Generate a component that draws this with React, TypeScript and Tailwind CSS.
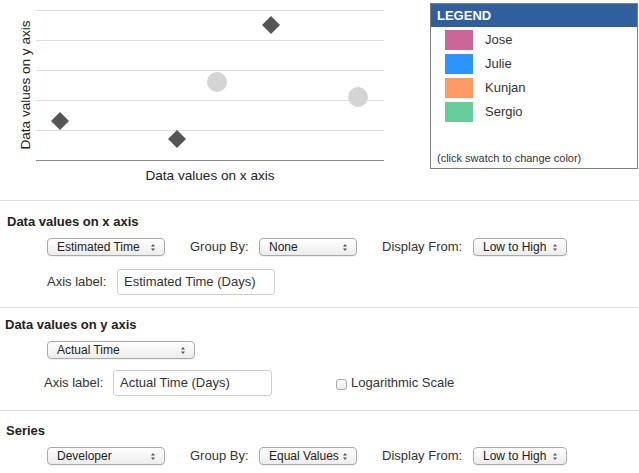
import React from "react";

function Arrows() {
  return (
    <svg width="6" height="9" viewBox="0 0 6 9" className="shrink-0">
      <path d="M3 1 L5 3.5 L1 3.5 Z" fill="#555" />
      <path d="M3 8 L5 5.5 L1 5.5 Z" fill="#555" />
    </svg>
  );
}

function Select({ label, w }: { label: string; w: string }) {
  return (
    <div
      className={`${w} h-[18px] flex items-center justify-between pl-[9px] pr-[8px] rounded-[4px] border border-[#a9a9a9] bg-gradient-to-b from-white to-[#ececec] text-[12px] text-[#222] shadow-[0_1px_0_rgba(0,0,0,0.06)]`}
    >
      <span className="leading-none">{label}</span>
      <Arrows />
    </div>
  );
}

function Input({ value, w }: { value: string; w: string }) {
  return (
    <div
      className={`${w} h-[26px] flex items-center pl-[6px] border border-[#cfcfcf] rounded-[3px] bg-white text-[13px] text-[#333]`}
    >
      {value}
    </div>
  );
}

function Chart() {
  const grid = [10.5, 40.5, 70.5, 100.5, 130.5];
  const diamonds: [number, number][] = [
    [60, 121],
    [177, 139],
    [271, 25],
  ];
  const circles: [number, number][] = [
    [217, 82],
    [358, 97],
  ];
  return (
    <svg width="420" height="200" viewBox="0 0 420 200" className="shrink-0">
      {grid.map((y) => (
        <line key={y} x1="36" x2="384" y1={y} y2={y} stroke="#dedede" strokeWidth="1" />
      ))}
      <line x1="36" x2="384" y1="160.5" y2="160.5" stroke="#8a8a8a" strokeWidth="1.2" />
      {circles.map(([x, y]) => (
        <circle key={x} cx={x} cy={y} r="10" fill="#d4d4d4" />
      ))}
      {diamonds.map(([x, y]) => (
        <polygon
          key={x}
          points={`${x},${y - 9} ${x + 9},${y} ${x},${y + 9} ${x - 9},${y}`}
          fill="#555555"
        />
      ))}
      <text
        x="210"
        y="180"
        textAnchor="middle"
        fontSize="13.6"
        fill="#222"
        fontFamily="'Liberation Sans', Arial, sans-serif"
      >
        Data values on x axis
      </text>
      <text
        x="0"
        y="0"
        transform="translate(30 85) rotate(-90)"
        textAnchor="middle"
        fontSize="13.6"
        fill="#222"
        fontFamily="'Liberation Sans', Arial, sans-serif"
      >
        Data values on y axis
      </text>
    </svg>
  );
}

function Legend() {
  const items = [
    { name: "Jose", color: "#cc6699" },
    { name: "Julie", color: "#2b94ff" },
    { name: "Kunjan", color: "#ff9966" },
    { name: "Sergio", color: "#66cc99" },
  ];
  return (
    <div className="ml-[10px] mt-[3px] w-[208px] h-[166px] border border-[#7f7f7f] flex flex-col bg-white">
      <div className="h-[23px] bg-[#2f5f9d] flex items-center pl-[6px] text-white font-bold text-[13px]">
        LEGEND
      </div>
      <div className="pt-[3px] pl-[14px] flex flex-col gap-[4px]">
        {items.map((it) => (
          <div key={it.name} className="flex items-center h-[20px]">
            <div className="w-[28px] h-[20px]" style={{ backgroundColor: it.color }} />
            <span className="ml-[12px] text-[13px] text-[#333]">{it.name}</span>
          </div>
        ))}
      </div>
      <div className="mt-auto pl-[6px] pb-[2px] text-[11px] text-[#333]">
        (click swatch to change color)
      </div>
    </div>
  );
}

export default function App() {
  return (
    <div
      className="w-[639px] h-[473px] bg-white text-[#333] overflow-hidden"
      style={{ fontFamily: "'Liberation Sans', Arial, Helvetica, sans-serif" }}
    >
      <div className="h-[201px] flex border-b border-[#dddddd]">
        <Chart />
        <Legend />
      </div>

      <div className="pt-[13px] pb-[12px] border-b border-[#dddddd]">
        <div className="pl-[7px] text-[13px] font-bold text-[#222] leading-[16px]">
          Data values on x axis
        </div>
        <div className="mt-[8px] h-[18px] pl-[47px] flex items-center text-[13px]">
          <Select label="Estimated Time" w="w-[118px]" />
          <div className="ml-[25px] w-[69px]">Group By:</div>
          <Select label="None" w="w-[98px]" />
          <div className="ml-[25px] w-[91px]">Display From:</div>
          <Select label="Low to High" w="w-[94px]" />
        </div>
        <div className="mt-[13px] h-[26px] pl-[47px] flex items-center text-[13px]">
          <div className="w-[70px]">Axis label:</div>
          <Input value="Estimated Time (Days)" w="w-[158px]" />
        </div>
      </div>

      <div className="pt-[9px] pb-[14px] border-b border-[#dddddd]">
        <div className="pl-[5px] text-[13px] font-bold text-[#222] leading-[16px]">
          Data values on y axis
        </div>
        <div className="mt-[8px] h-[18px] pl-[47px] flex items-center">
          <Select label="Actual Time" w="w-[148px]" />
        </div>
        <div className="mt-[11px] h-[26px] pl-[44px] flex items-center text-[13px]">
          <div className="w-[69px]">Axis label:</div>
          <Input value="Actual Time (Days)" w="w-[159px]" />
          <div className="ml-[64px] mt-[2px] w-[11px] h-[11px] rounded-[3px] border border-[#aaa] bg-gradient-to-b from-white to-[#ececec]" />
          <div className="ml-[4px]">Logarithmic Scale</div>
        </div>
      </div>

      <div className="pt-[12px]">
        <div className="pl-[6px] text-[13px] font-bold text-[#222] leading-[16px]">
          Series
        </div>
        <div className="mt-[8px] h-[18px] pl-[47px] flex items-center text-[13px]">
          <Select label="Developer" w="w-[118px]" />
          <div className="ml-[25px] w-[69px]">Group By:</div>
          <Select label="Equal Values" w="w-[98px]" />
          <div className="ml-[25px] w-[91px]">Display From:</div>
          <Select label="Low to High" w="w-[94px]" />
        </div>
      </div>
    </div>
  );
}
